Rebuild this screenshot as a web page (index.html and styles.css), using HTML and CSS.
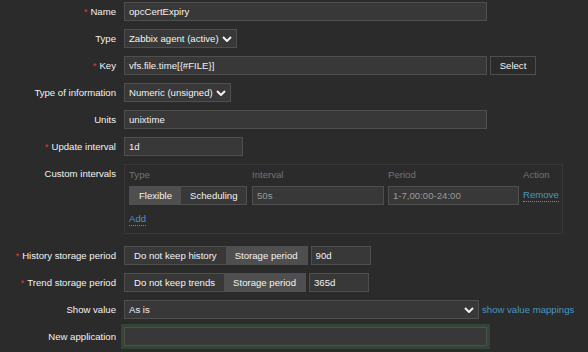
FILE: index.html
```html
<!DOCTYPE html>
<html lang="en">
<head>
    <meta charset="UTF-8">
    <title>Item prototype</title>
    <link rel="stylesheet" href="styles.css">
</head>
<body>
    <div class="form-list">
        <div class="row">
            <label class="label required">Name</label>
            <div class="field"><input class="input w-wide" type="text" value="opcCertExpiry"></div>
        </div>

        <div class="row">
            <label class="label">Type</label>
            <div class="field">
                <div class="select w-type">
                    <span>Zabbix agent (active)</span>
                    <svg viewBox="0 0 10 6"><polyline points="1,1 5,5 9,1"></polyline></svg>
                </div>
            </div>
        </div>

        <div class="row">
            <label class="label required">Key</label>
            <div class="field">
                <input class="input w-wide" type="text" value="vfs.file.time[{#FILE}]">
                <button class="btn">Select</button>
            </div>
        </div>

        <div class="row">
            <label class="label">Type of information</label>
            <div class="field">
                <div class="select w-info">
                    <span>Numeric (unsigned)</span>
                    <svg viewBox="0 0 10 6"><polyline points="1,1 5,5 9,1"></polyline></svg>
                </div>
            </div>
        </div>

        <div class="row">
            <label class="label">Units</label>
            <div class="field"><input class="input w-wide" type="text" value="unixtime"></div>
        </div>

        <div class="row">
            <label class="label required">Update interval</label>
            <div class="field"><input class="input w-interval" type="text" value="1d"></div>
        </div>

        <div class="row row-intervals">
            <label class="label">Custom intervals</label>
            <div class="intervals">
                <div class="intervals-grid">
                    <div class="th">Type</div>
                    <div class="th">Interval</div>
                    <div class="th">Period</div>
                    <div class="th">Action</div>

                    <div class="radio-group">
                        <span class="on">Flexible</span>
                        <span>Scheduling</span>
                    </div>
                    <input class="input" type="text" placeholder="50s">
                    <input class="input" type="text" placeholder="1-7,00:00-24:00">
                    <div><a class="link dotted" href="#">Remove</a></div>
                </div>
                <a class="link dotted add" href="#">Add</a>
            </div>
        </div>

        <div class="row">
            <label class="label required">History storage period</label>
            <div class="field">
                <div class="radio-group">
                    <span>Do not keep history</span>
                    <span class="on">Storage period</span>
                </div>
                <input class="input w-storage" type="text" value="90d">
            </div>
        </div>

        <div class="row">
            <label class="label required">Trend storage period</label>
            <div class="field">
                <div class="radio-group">
                    <span>Do not keep trends</span>
                    <span class="on">Storage period</span>
                </div>
                <input class="input w-storage" type="text" value="365d">
            </div>
        </div>

        <div class="row">
            <label class="label">Show value</label>
            <div class="field">
                <div class="select w-show">
                    <span>As is</span>
                    <svg viewBox="0 0 10 6"><polyline points="1,1 5,5 9,1"></polyline></svg>
                </div>
                <a class="link" href="#">show value mappings</a>
            </div>
        </div>

        <div class="row">
            <label class="label">New application</label>
            <div class="field"><input class="input w-wide focused" type="text"></div>
        </div>
    </div>
</body>
</html>
```

FILE: styles.css
```css
* {
    margin: 0;
    padding: 0;
    box-sizing: border-box;
}

body {
    background: #2b2b2b;
    color: #f2f2f2;
    font-family: "Liberation Sans", Arial, sans-serif;
    font-size: 9.6px;
    padding-top: 2px;
    overflow: hidden;
}

.row {
    display: flex;
    align-items: flex-start;
    margin-bottom: 8px;
}

.row-intervals {
    margin-bottom: 12px;
}

.label {
    flex-shrink: 0;
    width: 116px;
    margin-right: 8px;
    text-align: right;
    line-height: 19px;
    white-space: nowrap;
}

.required::before {
    content: "*";
    color: #e33734;
    margin-right: 3px;
}

.field {
    display: flex;
    align-items: center;
    gap: 3px;
}

.input {
    height: 19px;
    padding: 0 4px;
    background: #383838;
    border: 1px solid #4f4f4f;
    color: #f2f2f2;
    font: inherit;
    outline: none;
}

.input::placeholder {
    color: #9a9a9a;
}

.input.focused {
    box-shadow: 0 0 0 3px #344536;
}

.w-wide {
    width: 363px;
}

.w-interval {
    width: 119px;
}

.w-storage {
    width: 60px;
}

.w-type {
    width: 113px;
}

.w-info {
    width: 107px;
}

.w-show {
    width: 355px;
}

.select {
    display: flex;
    align-items: center;
    justify-content: space-between;
    height: 19px;
    padding: 0 4px;
    background: #383838;
    border: 1px solid #4f4f4f;
    white-space: nowrap;
}

.select svg {
    width: 10px;
    height: 6px;
    fill: none;
    stroke: #f2f2f2;
    stroke-width: 2;
}

.btn {
    width: 46px;
    height: 19px;
    background: transparent;
    border: 1px solid #4f4f4f;
    color: #f2f2f2;
    font: inherit;
}

.radio-group {
    display: flex;
    height: 19px;
    border: 1px solid #4f4f4f;
    background: #383838;
    white-space: nowrap;
}

.radio-group span {
    padding: 0 9px;
    line-height: 17px;
}

.radio-group .on {
    background: #4f4f4f;
}

.intervals {
    width: 439px;
    padding: 4px 4px 7px;
    border: 1px solid #383838;
}

.intervals-grid {
    display: grid;
    grid-template-columns: 119px 132px 131px auto;
    column-gap: 4px;
    row-gap: 5px;
    align-items: center;
}

.intervals-grid .radio-group {
    width: 118px;
}

.th {
    color: #737373;
    line-height: 12px;
}

.link {
    color: #4796c4;
    text-decoration: none;
    white-space: nowrap;
}

.dotted {
    display: inline-block;
    line-height: 12px;
    border-bottom: 1px dotted #4796c4;
}

.add {
    margin-top: 8px;
}
```
